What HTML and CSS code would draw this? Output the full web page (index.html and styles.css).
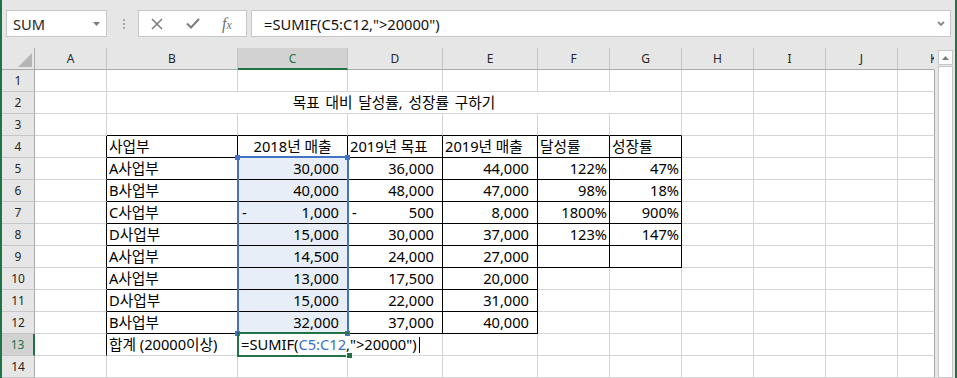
FILE: index.html
```html
<!DOCTYPE html>
<html lang="ko">
<head>
  <meta charset="utf-8">
  <link rel="stylesheet" href="styles.css">
</head>
<body>
  <div class="window">
    <div class="formula-bar">
      <div class="name-box">
        <span>SUM</span>
        <svg width="7" height="4" viewBox="0 0 7 4"><path d="M0 0h7L3.5 4z" fill="#7b7b7b"/></svg>
      </div>
      <div class="grip"><span></span><span></span><span></span></div>
      <div class="fx-buttons">
        <svg class="icon-cancel" width="12" height="12" viewBox="0 0 12 12">
          <path d="M1 1l10 10M11 1L1 11" stroke="#7b7b7b" stroke-width="1.5" fill="none"/>
        </svg>
        <svg class="icon-enter" width="14" height="11" viewBox="0 0 14 11">
          <path d="M1 5.5l4 4L13 1" stroke="#7b7b7b" stroke-width="2" fill="none"/>
        </svg>
        <span class="fx">f<span class="fx-x">x</span></span>
      </div>
      <div class="formula-input">
        <span>=SUMIF(C5:C12,"&gt;20000")</span>
        <svg width="8" height="5" viewBox="0 0 8 5"><path d="M1 1l3 3 3-3" stroke="#8a8a8a" stroke-width="1.8" fill="none"/></svg>
      </div>
    </div>

    <div class="sheet-area">
      <div class="sheet" id="sheet">
        <div class="range-box">
          <span class="handle h-tl"></span>
          <span class="handle h-tr"></span>
          <span class="handle h-bl"></span>
          <span class="handle h-br"></span>
        </div>
        <div class="active-box"><span class="fill-handle"></span></div>
      </div>
      <div class="vscroll">
        <div class="vs-up">
          <svg width="7" height="4" viewBox="0 0 7 4"><path d="M0 4h7L3.5 0z" fill="#7b7b7b"/></svg>
        </div>
        <div class="vs-thumb"></div>
      </div>
    </div>
  </div>

  <script>
    const letters = ['', 'A', 'B', 'C', 'D', 'E', 'F', 'G', 'H', 'I', 'J', 'K'];

    // values for columns B..G
    const rows = {
      4: ['사업부', '2018년 매출', '2019년 목표', '2019년 매출', '달성률', '성장률'],
      5: ['A사업부', 30000, 36000, 44000, '122%', '47%'],
      6: ['B사업부', 40000, 48000, 47000, '98%', '18%'],
      7: ['C사업부', -1000, -500, 8000, '1800%', '900%'],
      8: ['D사업부', 15000, 30000, 37000, '123%', '147%'],
      9: ['A사업부', 14500, 24000, 27000],
      10: ['A사업부', 13000, 17500, 20000],
      11: ['D사업부', 15000, 22000, 31000],
      12: ['B사업부', 32000, 37000, 40000],
      13: ['합계 (20000이상)']
    };

    function boxed(r, c) {
      if (r >= 4 && r <= 9 && c >= 2 && c <= 7) return true;
      if (r >= 10 && r <= 12 && c >= 2 && c <= 5) return true;
      return false;
    }

    function fillBody(cell, r, c) {
      if (r === 13 && c === 3) {
        cell.classList.add('editing');
        cell.innerHTML = '=SUMIF(<span class="ref">C5:C12</span>,"&gt;20000")<span class="caret"></span>';
        return;
      }
      const values = rows[r];
      if (!values) return;
      const v = values[c - 2];
      if (v === undefined) return;

      if (typeof v === 'number') {
        const text = Math.abs(v).toLocaleString('en-US');
        if (v < 0) {
          cell.classList.add('neg');
          cell.innerHTML = '<span>-</span><span>' + text + '</span>';
        } else {
          cell.classList.add('num');
          cell.textContent = text;
        }
      } else if (v.endsWith('%')) {
        cell.classList.add('pct');
        cell.textContent = v;
      } else {
        if (r === 4 && c === 3) cell.classList.add('center');
        cell.textContent = v;
      }
    }

    const sheet = document.getElementById('sheet');
    const overlays = Array.from(sheet.children);

    for (let r = 0; r <= 14; r++) {
      for (let c = 0; c <= 11; c++) {
        if (r === 2 && c >= 3 && c <= 7) continue;

        const cell = document.createElement('div');
        cell.className = 'cell';

        if (r === 0) {
          cell.classList.add('col-head');
          if (c === 0) {
            cell.classList.add('corner');
            cell.innerHTML = '<svg width="14" height="14" viewBox="0 0 14 14"><path d="M14 0v14H0z" fill="#b5b5b5"/></svg>';
          } else {
            cell.textContent = letters[c];
          }
          if (c === 3) cell.classList.add('sel');
          if (c === 11) cell.classList.add('clip');
        } else if (c === 0) {
          cell.classList.add('row-head');
          cell.textContent = r;
          if (r === 13) cell.classList.add('sel');
        } else {
          if (r === 2 && c === 2) {
            cell.classList.add('title');
            cell.textContent = '목표 대비 달성률, 성장률 구하기';
          } else {
            fillBody(cell, r, c);
          }
          if (boxed(r, c) || boxed(r, c + 1) || (r === 13 && c === 1)) cell.classList.add('br');
          if (boxed(r, c) || boxed(r + 1, c)) cell.classList.add('bb');
          if (r >= 5 && r <= 12 && c === 3) cell.classList.add('range');
          if (c === 11) cell.classList.add('edge');
        }

        sheet.insertBefore(cell, overlays[0]);
      }
    }
  </script>
</body>
</html>
```

FILE: styles.css
```css
* {
  box-sizing: border-box;
}

body {
  width: 957px;
  height: 378px;
  margin: 0;
  overflow: hidden;
  font-family: "Noto Sans", "Noto Sans CJK KR", sans-serif;
  font-size: 14.67px;
  color: #000;
  background: #e6e6e6;
}

.window {
  height: 378px;
  display: flex;
  flex-direction: column;
  border-left: 2px solid #217346;
  border-right: 2px solid #217346;
}

/* formula bar */

.formula-bar {
  height: 48px;
  flex: none;
  display: flex;
  align-items: flex-start;
  padding: 10px 0 0 4px;
}

.name-box {
  width: 101px;
  height: 27px;
  display: flex;
  align-items: center;
  justify-content: space-between;
  padding: 0 6px 0 6px;
  background: #fff;
  border: 1px solid #c6c6c6;
  color: #262626;
}

.grip {
  width: 2px;
  height: 27px;
  margin-left: 16px;
  display: flex;
  flex-direction: column;
  gap: 2px;
  padding-top: 9px;
}

.grip span {
  width: 2px;
  height: 2px;
  background: #a9a9a9;
}

.fx-buttons {
  width: 109px;
  height: 27px;
  margin-left: 13px;
  display: flex;
  align-items: center;
  padding-left: 12px;
  background: #fff;
  border: 1px solid #c6c6c6;
}

.icon-enter {
  margin-left: 23px;
}

.fx {
  margin-left: 22px;
  font-family: "Liberation Serif", serif;
  font-style: italic;
  font-size: 16px;
  color: #6f6f6f;
  line-height: 1;
}

.fx-x {
  font-size: 12px;
}

.formula-input {
  width: 700px;
  height: 27px;
  margin-left: 4px;
  display: flex;
  align-items: center;
  justify-content: space-between;
  padding: 0 5px 0 12px;
  background: #fff;
  border: 1px solid #c6c6c6;
  color: #111;
}

/* sheet */

.sheet-area {
  flex: 1;
  display: flex;
}

.sheet {
  position: relative;
  width: 933px;
  display: grid;
  grid-template-columns: 33px 72px 131px 110px 95px 95px 72px 72px 72px 72px 72px 37px;
  grid-template-rows: repeat(15, 22px);
  background: #fff;
}

.cell {
  padding: 0 2px;
  line-height: 21px;
  white-space: nowrap;
  overflow: hidden;
  border-right: 1px solid #d4d4d4;
  border-bottom: 1px solid #d4d4d4;
}

.col-head {
  background: #e6e6e6;
  border-right-color: #c3c3c3;
  border-bottom-color: #ababab;
  text-align: center;
  font-size: 12px;
  color: #262626;
}

.col-head.clip {
  text-align: left;
  padding-left: 32px;
  border-right-color: #e6e6e6;
}

.corner {
  display: flex;
  align-items: flex-end;
  justify-content: flex-end;
  padding: 0 2px 2px 0;
  border-right-color: #ababab;
}

.corner svg {
  display: block;
}

.row-head {
  background: #e6e6e6;
  border-right-color: #ababab;
  border-bottom-color: #c6c6c6;
  text-align: center;
  font-size: 12px;
  color: #262626;
}

.col-head.sel {
  background: #d2d2d2;
  border-bottom: 2px solid #217346;
  color: #217346;
}

.row-head.sel {
  background: #d2d2d2;
  border-right: 2px solid #217346;
  color: #217346;
}

.br {
  border-right-color: #000;
}

.bb {
  border-bottom-color: #000;
}

.edge {
  border-right-color: #a6a6a6;
}

.range {
  background: #e8eef8;
}

.title {
  grid-column: span 6;
  text-align: center;
  word-spacing: 2px;
}

.center {
  text-align: center;
}

.num {
  text-align: right;
  padding-right: 8px;
}

.pct {
  text-align: right;
  padding-right: 2px;
}

.neg {
  display: flex;
  justify-content: space-between;
  padding: 0 8px 0 4px;
}

.editing {
  position: relative;
  z-index: 1;
  overflow: visible;
  padding-left: 3px;
  border-right-color: transparent;
}

.ref {
  color: #3b6bcb;
}

.caret {
  display: inline-block;
  width: 1px;
  height: 16px;
  margin-left: 2px;
  vertical-align: -3px;
  background: #000;
}

/* selection overlays */

.range-box {
  position: absolute;
  left: 235px;
  top: 108px;
  width: 112px;
  height: 178px;
  border: 2px solid #4472c4;
  z-index: 2;
}

.handle {
  position: absolute;
  width: 5px;
  height: 5px;
  background: #4472c4;
}

.h-tl { left: -4px; top: -3px; }
.h-tr { left: 106px; top: -3px; }
.h-bl { left: -4px; top: 173px; }
.h-br { left: 106px; top: 173px; }

.active-box {
  position: absolute;
  left: 235px;
  top: 284px;
  width: 112px;
  height: 25px;
  border: 2px solid #217346;
  border-right: none;
  z-index: 3;
}

.fill-handle {
  position: absolute;
  left: 108px;
  top: 19px;
  width: 5px;
  height: 5px;
  background: #217346;
  outline: 1px solid #fff;
}

/* scrollbar */

.vscroll {
  width: 15px;
  margin-left: 3px;
  display: flex;
  flex-direction: column;
  padding-top: 2px;
}

.vs-up {
  height: 15px;
  display: flex;
  align-items: center;
  justify-content: center;
  background: #fff;
  border: 1px solid #c6c6c6;
}

.vs-thumb {
  flex: 1;
  margin-top: 1px;
  background: #fff;
  border: 1px solid #c6c6c6;
}
```
